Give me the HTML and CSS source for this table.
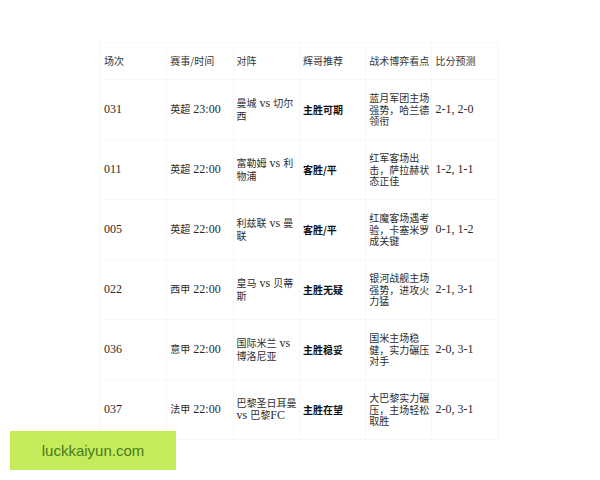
FILE: index.html
```html
<!DOCTYPE html>
<html lang="zh-CN">
<head>
<meta charset="utf-8">
<title>赛事推荐</title>
<link rel="stylesheet" href="styles.css">
</head>
<body>
<div class="page">
  <table class="matches">
    <colgroup>
      <col class="c"><col class="c"><col class="c"><col class="c"><col class="c"><col class="c">
    </colgroup>
    <thead>
      <tr class="head">
        <th>场次</th><th>赛事/时间</th><th>对阵</th><th>辉哥推荐</th><th>战术博弈看点</th><th>比分预测</th>
      </tr>
    </thead>
    <tbody>
      <tr>
        <td><span class="l">031</span></td>
        <td>英超<span class="l"> 23:00</span></td>
        <td>曼城<span class="l"> vs </span>切尔<br>西</td>
        <td class="pick">主胜可期</td>
        <td>蓝月军团主场<br>强势，哈兰德<br>领衔</td>
        <td><span class="l">2-1, 2-0</span></td>
      </tr>
      <tr>
        <td><span class="l">011</span></td>
        <td>英超<span class="l"> 22:00</span></td>
        <td>富勒姆<span class="l"> vs </span>利<br>物浦</td>
        <td class="pick">客胜/平</td>
        <td>红军客场出<br>击，萨拉赫状<br>态正佳</td>
        <td><span class="l">1-2, 1-1</span></td>
      </tr>
      <tr>
        <td><span class="l">005</span></td>
        <td>英超<span class="l"> 22:00</span></td>
        <td>利兹联<span class="l"> vs </span>曼<br>联</td>
        <td class="pick">客胜/平</td>
        <td>红魔客场遇考<br>验，卡塞米罗<br>成关键</td>
        <td><span class="l">0-1, 1-2</span></td>
      </tr>
      <tr>
        <td><span class="l">022</span></td>
        <td>西甲<span class="l"> 22:00</span></td>
        <td>皇马<span class="l"> vs </span>贝蒂<br>斯</td>
        <td class="pick">主胜无疑</td>
        <td>银河战舰主场<br>强势，进攻火<br>力猛</td>
        <td><span class="l">2-1, 3-1</span></td>
      </tr>
      <tr>
        <td><span class="l">036</span></td>
        <td>意甲<span class="l"> 22:00</span></td>
        <td>国际米兰<span class="l"> vs</span><br>博洛尼亚</td>
        <td class="pick">主胜稳妥</td>
        <td>国米主场稳<br>健，实力碾压<br>对手</td>
        <td><span class="l">2-0, 3-1</span></td>
      </tr>
      <tr>
        <td><span class="l">037</span></td>
        <td>法甲<span class="l"> 22:00</span></td>
        <td>巴黎圣日耳曼<br><span class="l">vs </span>巴黎<span class="l">FC</span></td>
        <td class="pick">主胜在望</td>
        <td>大巴黎实力碾<br>压，主场轻松<br>取胜</td>
        <td><span class="l">2-0, 3-1</span></td>
      </tr>
    </tbody>
  </table>
</div>
<div class="watermark">luckkaiyun.com</div>
</body>
</html>
```

FILE: styles.css
```css
html, body {
  margin: 0;
  padding: 0;
  background: #ffffff;
}

.page {
  padding: 42px 0 0 100px;
}

.matches {
  table-layout: fixed;
  border-collapse: collapse;
  width: 398px;
  font-family: "Noto Sans CJK SC", "Liberation Sans", sans-serif;
  font-size: 10px;
  line-height: 11.8px;
  color: #2e2e2e;
}

.matches .c {
  width: 66.3px;
}

.matches th,
.matches td {
  padding: 0 3px;
  text-align: left;
  vertical-align: middle;
  white-space: nowrap;
  border: 1px solid #f8f8f8;
}

.matches th {
  font-weight: normal;
  height: 36px;
  color: #363636;
}

.matches td {
  height: 59px;
}

.matches .l {
  font-family: "Liberation Serif", "Times New Roman", serif;
  font-size: 12px;
  color: #2a2a2a;
}

.matches .pick {
  font-weight: bold;
  color: #111111;
}

.watermark {
  position: absolute;
  left: 10px;
  top: 431px;
  width: 166px;
  height: 39px;
  background: #c4eb5a;
  color: #4a7a20;
  font-family: "Liberation Sans", Arial, sans-serif;
  font-size: 15px;
  line-height: 39px;
  text-align: center;
}
```
